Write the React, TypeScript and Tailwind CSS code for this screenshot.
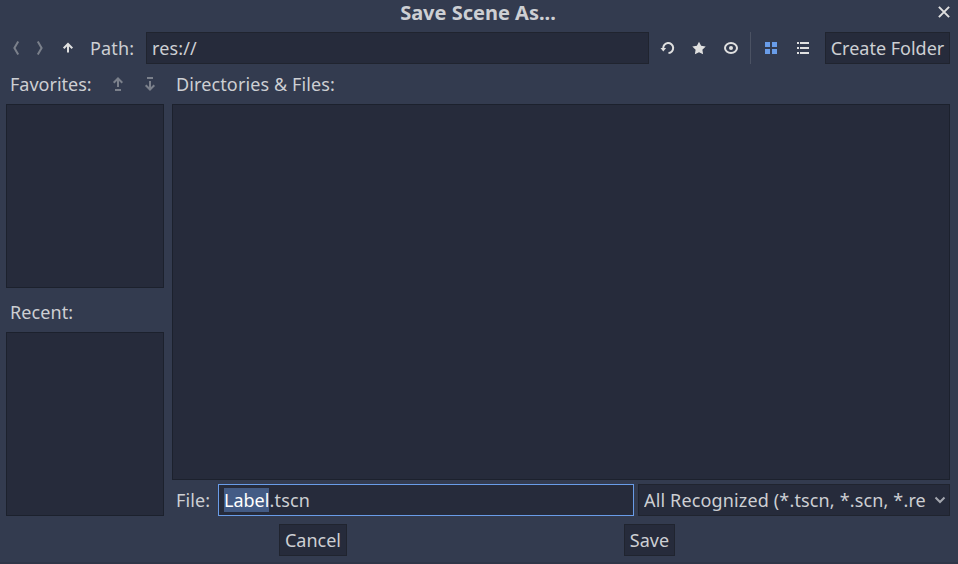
import type { ReactNode } from "react";

function Icon({ className = "", children }: { className?: string; children: ReactNode }) {
  return (
    <svg viewBox="0 0 16 16" className={`h-4 w-4 shrink-0 ${className}`} fill="none" stroke="currentColor" strokeWidth="2">
      {children}
    </svg>
  );
}

const panel = "border border-[#1c212d] bg-[#262b3b]";
const field = "border border-[#20242f] bg-[#262b3b]";

export default function App() {
  return (
    <div
      className="flex h-[564px] w-[958px] flex-col overflow-hidden border-b-2 border-[#2f3648] bg-[#333b4f] text-[18px] leading-[24px] whitespace-nowrap text-[#cdcfd3]"
      style={{ fontFamily: '"Noto Sans", sans-serif' }}
    >
      <header className="grid h-8 shrink-0 grid-cols-[1fr_auto_1fr]">
        <h1 className="col-start-2 pr-[2px] text-[20px] leading-[26px] font-bold">Save Scene As...</h1>
        <button className="mt-1 mr-[6px] h-4 justify-self-end text-[#e0e0e0]">
          <Icon><path d="M2.9 2.9l10.2 10.2m0-10.2L2.9 13.1" /></Icon>
        </button>
      </header>

      <div className="flex h-8 shrink-0 items-center pr-2 pl-2">
        <Icon className="text-[#7b808b]"><path d="M10.2 1.5L6.4 8l3.8 6.5" /></Icon>
        <Icon className="ml-2 text-[#7b808b]"><path d="M5.8 1.5L9.6 8l-3.8 6.5" /></Icon>
        <Icon className="ml-3 text-[#e0e0e0]"><path d="M8 12.5V4.5M3.7 8.3L8 4l4.3 4.3" /></Icon>
        <span className="ml-[14px] w-14 tracking-[0.15px]">Path:</span>
        <div className={`flex h-8 w-[503px] items-center pl-[5px] tracking-[0.15px] ${field}`}>res://</div>
        <Icon className="ml-[11px] text-[#e0e0e0]">
          <path d="M3.2 8.5A5 5 0 1 1 8.5 13" />
          <path d="M.5 8h5.6L3.3 11.6z" fill="currentColor" stroke="none" />
        </Icon>
        <Icon className="ml-[15px] text-[#e0e0e0]">
          <path d="M8 1.7l2.1 4 4.6.8-3.3 3.2.7 4.6L8 12.2l-4.1 2.1.7-4.6-3.3-3.2 4.6-.8z" fill="currentColor" stroke="none" />
        </Icon>
        <Icon className="ml-4 text-[#e0e0e0]">
          <ellipse cx="8" cy="8" rx="6" ry="5" />
          <circle cx="8" cy="8" r="2" fill="currentColor" stroke="none" />
        </Icon>
        <div className="ml-[11px] h-8 w-px bg-[#4b5263]" />
        <Icon className="ml-3 text-[#699ce8]">
          <path d="M2 2h5v5H2zM9 2h5v5H9zM2 9h5v5H2zM9 9h5v5H9z" fill="currentColor" stroke="none" />
        </Icon>
        <Icon className="ml-4 text-[#e0e0e0]">
          <path d="M2 3h2M5 3h9M2 8h2M5 8h9M2 13h2M5 13h9" />
        </Icon>
        <button className={`ml-auto h-8 w-[125px] ${field}`}>Create Folder</button>
      </div>

      <main className="flex h-[452px] shrink-0 gap-2 pr-2 pl-[6px]">
        <aside className="flex w-[158px] flex-col">
          <div className="flex h-10 items-center pl-1">
            <span className="w-[100px]">Favorites:</span>
            <Icon className="text-[#7b808b]"><path d="M8 11V3M3.7 6.8L8 2.5l4.3 4.3M5 14h6" /></Icon>
            <Icon className="ml-4 text-[#7b808b]"><path d="M8 5v8M3.7 9.2L8 13.5l4.3-4.3M5 2h6" /></Icon>
          </div>
          <div className={`h-[184px] ${panel}`} />
          <div className="flex h-11 items-center pt-1 pl-1 tracking-[0.08px]">Recent:</div>
          <div className={`h-[184px] ${panel}`} />
        </aside>

        <section className="flex flex-1 flex-col">
          <div className="flex h-10 items-center pl-1 tracking-[0.12px]">Directories &amp; Files:</div>
          <div className={`h-[376px] ${panel}`} />
          <div className="mt-1 flex h-8">
            <span className="flex w-[46px] items-center pl-1 tracking-[0.1px]">File:</span>
            <div className="flex w-[416px] items-center border border-[#699ce8] bg-[#262b3b] pl-[5px]">
              <span className="bg-[#435b85] text-white">Label</span>
              <span className="tracking-[0.2px]">.tscn</span>
            </div>
            <button className={`ml-1 flex w-[312px] items-center pl-[5px] ${field}`}>
              <span className="w-[283px] overflow-hidden text-left tracking-[0.15px]">All Recognized (*.tscn, *.scn, *.re</span>
              <Icon className="ml-[5px] text-[#a4a7af]"><path d="M3.5 5.5L8 10l4.5-4.5" /></Icon>
            </button>
          </div>
        </section>
      </main>

      <footer className="mt-2 flex h-8 shrink-0 pl-[279px]">
        <button className={`w-[68px] ${field}`}>Cancel</button>
        <button className={`ml-[277px] w-[51px] ${field}`}>Save</button>
      </footer>
    </div>
  );
}
